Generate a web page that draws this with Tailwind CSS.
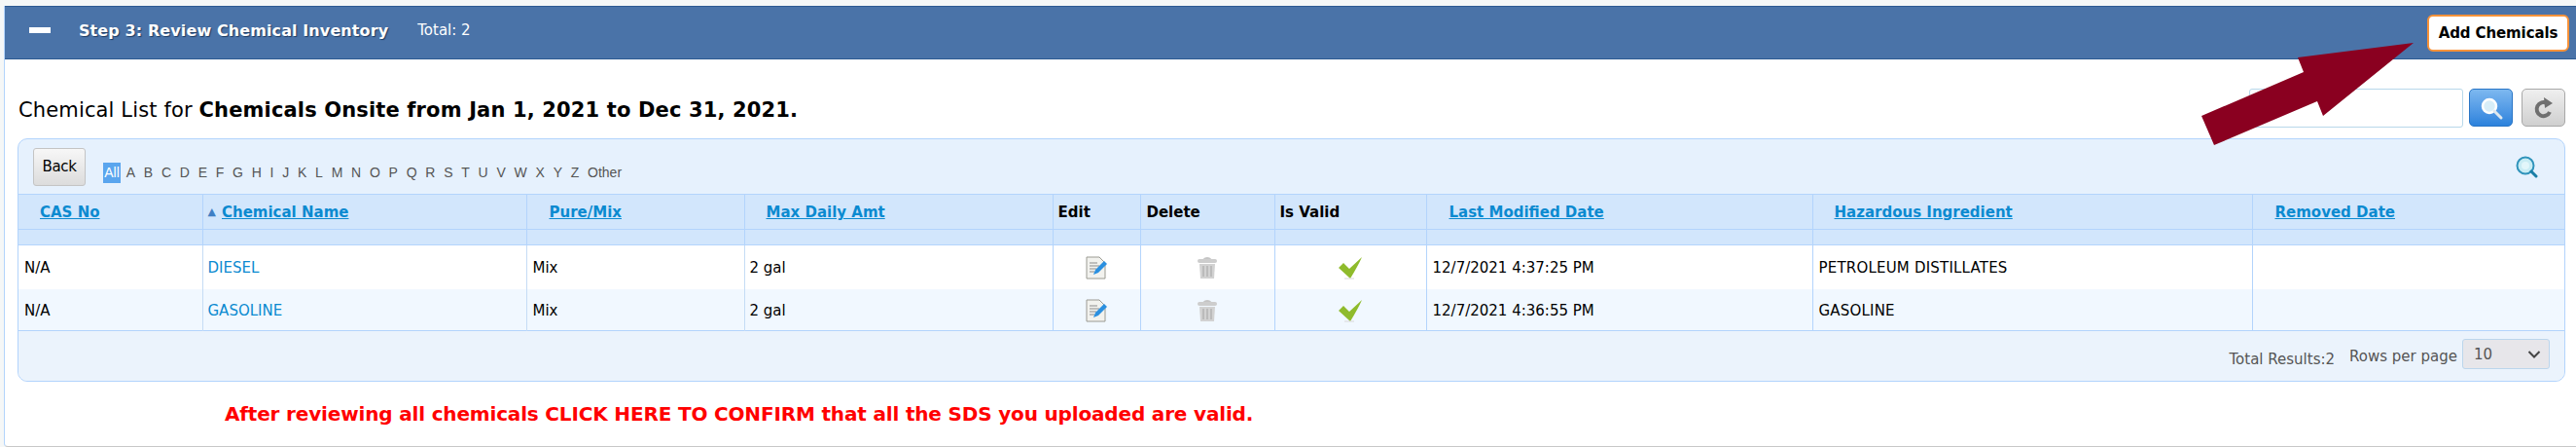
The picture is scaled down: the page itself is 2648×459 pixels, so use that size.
<!DOCTYPE html>
<html lang="en">
<head>
    <meta charset="UTF-8">
    <title>Step 3: Review Chemical Inventory</title>
    <script src="https://cdn.jsdelivr.net/npm/@tailwindcss/browser@4"></script>
</head>
<body class="bg-white w-[2648px] h-[459px] overflow-hidden font-['DejaVu_Sans',sans-serif] text-black">
    <div class="relative h-[459px] bg-[#f5f7f7] pt-[6px] pl-[4px]">
        <div class="h-[453px] bg-white border-l border-b border-l-[#b3d4fc] border-b-[#c8c8c8] rounded-bl-[4px]">
            <!-- step header -->
            <div class="h-[55px] bg-[#4a73a8] border-y border-[#2c5a92] flex items-center pl-[25px] pr-[7px] text-white">
                <span class="w-[22px] h-[6px] bg-white mr-[29px] -mt-[5px]"></span>
                <span class="font-bold text-[16px] tracking-[0.1px] -mt-[4px] [text-shadow:1px_1px_1px_#1d3a60]">Step 3: Review Chemical Inventory</span>
                <span class="text-[15px] ml-[30px] -mt-[4px]">Total: 2</span>
                <button class="ml-auto w-[146px] h-[38px] pt-[2px] bg-white border-2 border-[#f79239] rounded-[6px] text-black font-bold text-[15px] tracking-[-0.1px]">Add Chemicals</button>
            </div>
            <!-- title and search -->
            <div class="h-[81px] flex items-start pl-[14px] pr-[11px] pt-[30px]">
                <h2 class="text-[21px] tracking-[0.14px] leading-[44px]">Chemical List for <b>Chemicals Onsite from Jan 1, 2021 to Dec 31, 2021.</b></h2>
                <input class="ml-auto w-[220px] h-[40px] bg-white border border-[#b8d8ea] rounded-[3px]">
                <button class="ml-[6px] w-[45px] h-[39px] rounded-[5px] border border-[#2a76c6] bg-gradient-to-b from-[#7db8f0] to-[#2b82dc] flex items-center justify-center">
                    <svg width="26" height="26" viewBox="0 0 26 26"><circle cx="11" cy="11" r="7" fill="#d8eef8" stroke="#fff" stroke-width="2.500"/><path d="M16 16l7 7" stroke="#dfe8ee" stroke-width="3" stroke-linecap="round"/></svg>
                </button>
                <button class="ml-[9px] w-[45px] h-[39px] rounded-[5px] border border-[#a8a8a8] bg-gradient-to-b from-[#efefef] to-[#cfcfcf] flex items-center justify-center">
                    <svg width="24" height="26" viewBox="0 0 24 26"><path d="M18 17a7 7 0 1 1-3-9" fill="none" stroke="#6f6f6f" stroke-width="4"/><path d="M12 2l9 6-8 5z" fill="#6f6f6f"/></svg>
                </button>
            </div>
            <!-- grid panel -->
            <div class="ml-[13px] w-[2619px] h-[250px] bg-[#e6f1fd] border border-[#b3d4fc] rounded-[10px] overflow-hidden">
                <div class="h-[56px] flex items-start pl-[15px] pt-[9px] pr-[27px]">
                    <button class="w-[54px] h-[39px] rounded-[3px] border border-[#c4c4c4] bg-gradient-to-b from-[#f7f7f7] to-[#dcdcdc] text-[15px] tracking-[-0.3px]">Back</button>
                    <div class="ml-[18px] mt-[15px] flex items-center text-[14px] text-[#555] gap-[8.75px] font-['Liberation_Sans',sans-serif]">
                        <span class="bg-[#5aa5ee] text-white w-[18px] text-center -mr-[3px]">All</span>
                        <span>A</span><span>B</span><span>C</span><span>D</span><span>E</span><span>F</span><span>G</span><span>H</span><span>I</span><span>J</span><span>K</span><span>L</span><span>M</span><span>N</span><span>O</span><span>P</span><span>Q</span><span>R</span><span>S</span><span>T</span><span>U</span><span>V</span><span>W</span><span>X</span><span>Y</span><span>Z</span><span>Other</span>
                    </div>
                    <svg class="ml-auto mt-[7px]" width="24" height="24" viewBox="0 0 24 24"><circle cx="11" cy="11" r="8.500" fill="#c8ecf4" stroke="#2f93bb" stroke-width="2"/><circle cx="11" cy="11" r="4" fill="#e2f6fa"/><path d="M17 17l5 5" stroke="#1b7ea6" stroke-width="3" stroke-linecap="round"/></svg>
                </div>
                <table class="w-full table-fixed border-collapse text-[15px]">
                    <colgroup>
                        <col class="w-[189px]"><col class="w-[333px]"><col class="w-[224px]"><col class="w-[317px]"><col class="w-[90px]"><col class="w-[138px]"><col class="w-[156px]"><col class="w-[397px]"><col class="w-[452px]"><col>
                    </colgroup>
                    <thead class="bg-[#d2e6fc]">
                        <tr class="h-[36px] border-t border-[#b3d4fc]">
                            <th class="text-left pl-[22px] pt-[2px] border-r border-[#b3d4fc] font-bold"><a class="text-[#0b8ad0] underline" href="#">CAS No</a></th>
                            <th class="text-left pl-[5px] pt-[2px] border-r border-[#b3d4fc] font-bold"><span class="text-[#3f7fc4] text-[11px] mr-[6px] align-[2px]">▲</span><a class="text-[#0b8ad0] underline" href="#">Chemical Name</a></th>
                            <th class="text-left pl-[23px] pt-[2px] border-r border-[#b3d4fc] font-bold"><a class="text-[#0b8ad0] underline" href="#">Pure/Mix</a></th>
                            <th class="text-left pl-[22px] pt-[2px] border-r border-[#b3d4fc] font-bold"><a class="text-[#0b8ad0] underline" href="#">Max Daily Amt</a></th>
                            <th class="text-left pl-[5px] pt-[2px] border-r border-[#b3d4fc] font-bold">Edit</th>
                            <th class="text-left pl-[6px] pt-[2px] border-r border-[#b3d4fc] font-bold">Delete</th>
                            <th class="text-left pl-[5px] pt-[2px] border-r border-[#b3d4fc] font-bold">Is Valid</th>
                            <th class="text-left pl-[23px] pt-[2px] border-r border-[#b3d4fc] font-bold"><a class="text-[#0b8ad0] underline" href="#">Last Modified Date</a></th>
                            <th class="text-left pl-[22px] pt-[2px] border-r border-[#b3d4fc] font-bold"><a class="text-[#0b8ad0] underline" href="#">Hazardous Ingredient</a></th>
                            <th class="text-left pl-[23px] pt-[2px] font-bold"><a class="text-[#0b8ad0] underline" href="#">Removed Date</a></th>
                        </tr>
                        <tr class="h-[16px] border-y border-[#b3d4fc]">
                            <td class="border-r border-[#b3d4fc]"></td><td class="border-r border-[#b3d4fc]"></td><td class="border-r border-[#b3d4fc]"></td><td class="border-r border-[#b3d4fc]"></td><td class="border-r border-[#b3d4fc]"></td><td class="border-r border-[#b3d4fc]"></td><td class="border-r border-[#b3d4fc]"></td><td class="border-r border-[#b3d4fc]"></td><td class="border-r border-[#b3d4fc]"></td><td></td>
                        </tr>
                    </thead>
                    <tbody>
                        <tr class="h-[45px] bg-white">
                            <td class="pl-[6px] pt-[2px] border-r border-[#c5dcf5]">N/A</td>
                            <td class="pl-[5px] pt-[2px] border-r border-[#c5dcf5]"><a class="text-[#0b8ad0]" href="#">DIESEL</a></td>
                            <td class="pl-[6px] pt-[2px] border-r border-[#c5dcf5]">Mix</td>
                            <td class="pl-[5px] pt-[2px] border-r border-[#b3d4fc]">2 gal</td>
                            <td class="pt-[2px] border-r border-[#b3d4fc]"><svg class="mx-auto" width="22" height="24" viewBox="0 0 22 24"><path d="M1 1h13l6 6v16H1z" fill="#f2f2ee" stroke="#9a9a92"/><path d="M4 7h8M4 10h10M4 13h7M4 16h5" stroke="#8c8c8c"/><path d="M8 19l2-5 9-9 3 3-9 9z" fill="#2b90e0"/></svg></td>
                            <td class="pt-[2px] border-r border-[#b3d4fc]"><svg class="mx-auto" width="20" height="24" viewBox="0 0 20 24"><path d="M6 4q4-4 8 0" fill="none" stroke="#c4c4c4" stroke-width="2"/><rect x="0" y="3" width="20" height="4" rx="2" fill="#cdcdcd"/><path d="M2 8h16l-1 15H3z" fill="#d2d2d2"/><path d="M6 10v11M10 10v11M14 10v11" stroke="#b4b4b4" stroke-width="1.500"/></svg></td>
                            <td class="pt-[2px] border-r border-[#b3d4fc]"><svg class="mx-auto" width="24" height="24" viewBox="0 0 24 24"><path d="M0 12l5-5 6 6L24 1q-4 9-12 22z" fill="#8fbb2c"/><path d="M6 23h10" stroke="#d8d8d8"/></svg></td>
                            <td class="pl-[6px] pt-[2px] border-r border-[#b3d4fc]">12/7/2021 4:37:25 PM</td>
                            <td class="pl-[6px] pt-[2px] border-r border-[#b3d4fc] tracking-[0.2px]">PETROLEUM DISTILLATES</td>
                            <td></td>
                        </tr>
                        <tr class="h-[43px] bg-[#f1f8ff] border-b border-[#b3d4fc]">
                            <td class="pl-[6px] pt-[2px] border-r border-[#c5dcf5]">N/A</td>
                            <td class="pl-[5px] pt-[2px] border-r border-[#c5dcf5]"><a class="text-[#0b8ad0]" href="#">GASOLINE</a></td>
                            <td class="pl-[6px] pt-[2px] border-r border-[#c5dcf5]">Mix</td>
                            <td class="pl-[5px] pt-[2px] border-r border-[#b3d4fc]">2 gal</td>
                            <td class="pt-[2px] border-r border-[#b3d4fc]"><svg class="mx-auto" width="22" height="24" viewBox="0 0 22 24"><path d="M1 1h13l6 6v16H1z" fill="#f2f2ee" stroke="#9a9a92"/><path d="M4 7h8M4 10h10M4 13h7M4 16h5" stroke="#8c8c8c"/><path d="M8 19l2-5 9-9 3 3-9 9z" fill="#2b90e0"/></svg></td>
                            <td class="pt-[2px] border-r border-[#b3d4fc]"><svg class="mx-auto" width="20" height="24" viewBox="0 0 20 24"><path d="M6 4q4-4 8 0" fill="none" stroke="#c4c4c4" stroke-width="2"/><rect x="0" y="3" width="20" height="4" rx="2" fill="#cdcdcd"/><path d="M2 8h16l-1 15H3z" fill="#d2d2d2"/><path d="M6 10v11M10 10v11M14 10v11" stroke="#b4b4b4" stroke-width="1.500"/></svg></td>
                            <td class="pt-[2px] border-r border-[#b3d4fc]"><svg class="mx-auto" width="24" height="24" viewBox="0 0 24 24"><path d="M0 12l5-5 6 6L24 1q-4 9-12 22z" fill="#8fbb2c"/><path d="M6 23h10" stroke="#d8d8d8"/></svg></td>
                            <td class="pl-[6px] pt-[2px] border-r border-[#b3d4fc]">12/7/2021 4:36:55 PM</td>
                            <td class="pl-[6px] pt-[2px] border-r border-[#b3d4fc] tracking-[0.2px]">GASOLINE</td>
                            <td></td>
                        </tr>
                    </tbody>
                </table>
                <div class="h-[52px] bg-[#ebf3fc] flex items-start justify-end pr-[15px] text-[15px] leading-[20px] text-[#555]">
                    <span class="mt-[19px]">Total Results:2</span>
                    <span class="ml-[15px] mt-[16px]">Rows per page</span>
                    <div class="ml-[5px] mt-[8px] w-[90px] h-[31px] bg-[#e7e6ea] border border-[#bcd6ec] rounded-[3px] flex items-center justify-between pl-[11px] pr-[8px]">
                        <span>10</span>
                        <svg width="14" height="10" viewBox="0 0 14 10"><path d="M1.500 2l5.500 5.500L12.500 2" fill="none" stroke="#444" stroke-width="2"/></svg>
                    </div>
                </div>
            </div>
            <p class="mt-[19px] pl-[226px] text-[red] font-bold text-[20px] leading-[28px] tracking-[-0.17px]">After reviewing all chemicals CLICK HERE TO CONFIRM that all the SDS you uploaded are valid.</p>
        </div>
        <!-- annotation arrow over the page -->
        <svg class="absolute left-0 top-0" width="2648" height="459"><polygon points="2481,44 2362,59 2368,74 2263,119 2276,149 2382,104 2388,119" fill="#8a0020"/></svg>
    </div>
</body>
</html>
